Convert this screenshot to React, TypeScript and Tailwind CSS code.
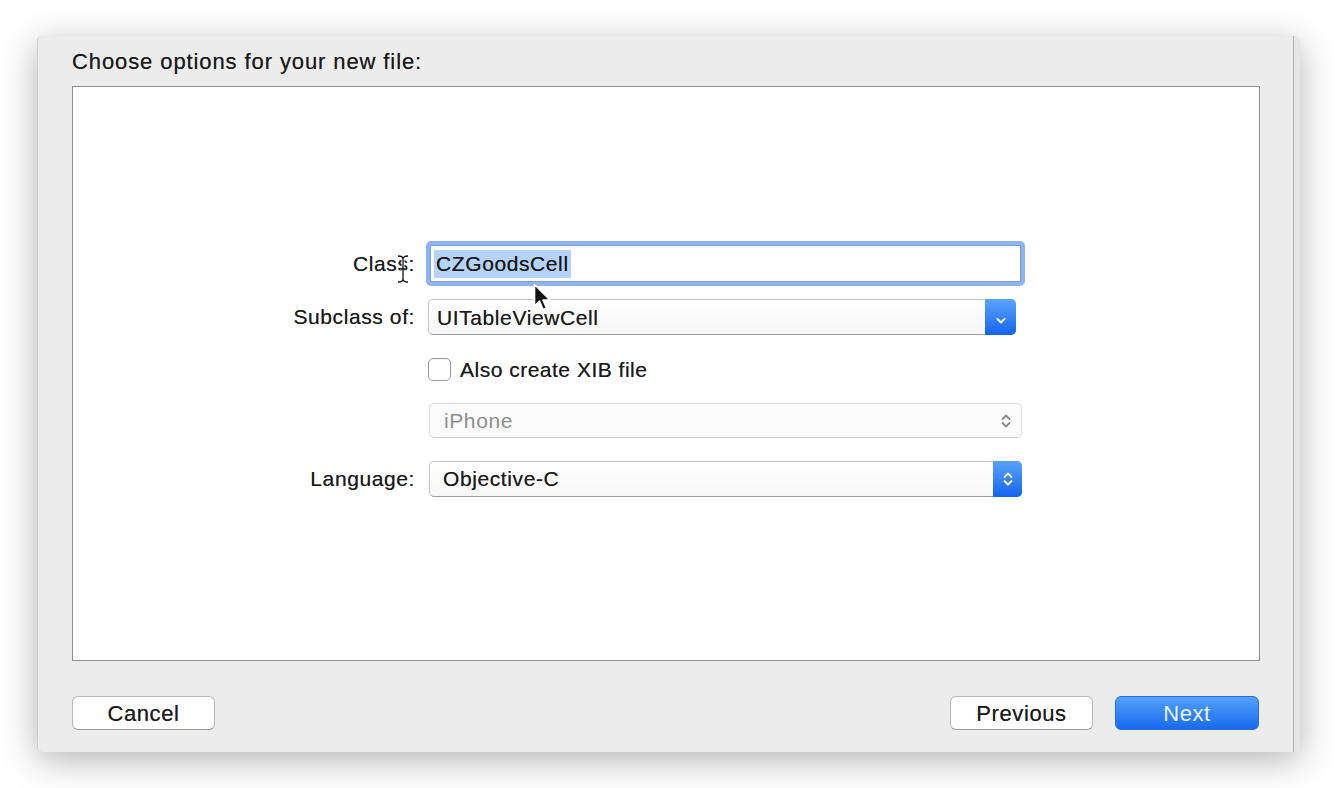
import React from 'react';

const font = { fontFamily: '"Liberation Sans", Arial, sans-serif' };

const Chevron = ({ up = true, down = true, color = 'white' }: { up?: boolean; down?: boolean; color?: string }) => (
  <svg width="12" height="18" viewBox="0 0 12 18" fill="none">
    {up && <path d="M2.5 7 L6 3.5 L9.5 7" stroke={color} strokeWidth="1.8" strokeLinecap="round" strokeLinejoin="round" />}
    {down && <path d="M2.5 11 L6 14.5 L9.5 11" stroke={color} strokeWidth="1.8" strokeLinecap="round" strokeLinejoin="round" />}
  </svg>
);

const Label = ({ children }: { children: React.ReactNode }) => (
  <div className="w-[342px] text-right text-[21px] tracking-[0.6px] text-[#1a1a1a] [text-shadow:0_0_0.5px_rgba(0,0,0,0.6)]">{children}</div>
);

export default function App() {
  return (
    <div className="min-h-screen w-[1338px] h-[788px] bg-white pt-[36px] pl-[37px] overflow-hidden" style={font}>
      {/* dialog window */}
      <div className="flex w-[1263px] h-[716px] rounded-[5px] bg-[#ececec] shadow-[0_8px_36px_rgba(0,0,0,0.3)]">
        <div className="flex flex-col w-[1256px] border-l border-[#cfcfcf] rounded-l-[5px]">
          <div className="h-[50px] pl-[34px] pt-[9px] text-[22px] tracking-[0.9px] text-[#1a1a1a] [text-shadow:0_0_0.5px_rgba(0,0,0,0.6)]">
            Choose options for your new file:
          </div>

          {/* content panel */}
          <div className="relative ml-[34px] w-[1188px] h-[575px] bg-white border border-[#8f8f8f] flex flex-col pt-[154px]">
            {/* Class */}
            <div className="flex items-center h-[45px]">
              <Label>Class:</Label>
              <div className="ml-[11px] w-[599px] h-[45px] rounded-[5px] bg-[#8db4f2] p-[4px]">
                <div className="w-full h-full bg-white border border-[#7d9fd6] flex items-center pl-[3px]">
                  <span className="bg-[#b5d3f8] px-[2px] leading-[28px] text-[21px] tracking-[0.6px] text-[#141414] [text-shadow:0_0_0.5px_rgba(0,0,0,0.6)]">CZGoodsCell</span>
                </div>
              </div>
            </div>

            {/* Subclass of */}
            <div className="flex items-center h-[36px] mt-[13px]">
              <Label>Subclass of:</Label>
              <div className="ml-[13px] w-[588px] h-[36px] flex rounded-[5px] border border-[#c4c4c4] border-b-[#9d9d9d] bg-gradient-to-b from-white to-[#f7f7f7]">
                <div className="flex-1 flex items-center pl-[8px] pt-[2px] text-[21px] tracking-[0.6px] text-[#1a1a1a] [text-shadow:0_0_0.5px_rgba(0,0,0,0.6)]">UITableViewCell</div>
                <div className="w-[31px] -my-px -mr-px rounded-r-[5px] bg-gradient-to-b from-[#5aa3fb] to-[#1263ec] flex items-center justify-center">
                  <Chevron up={false} />
                </div>
              </div>
            </div>

            {/* checkbox */}
            <div className="flex items-center h-[23px] mt-[23px]">
              <div className="w-[342px]" />
              <div className="ml-[13px] w-[23px] h-[23px] rounded-[5px] border border-[#9a9a9a] bg-white shadow-[inset_0_1px_1px_rgba(0,0,0,0.06)]" />
              <span className="ml-[9px] text-[21px] tracking-[0.5px] text-[#1a1a1a] [text-shadow:0_0_0.5px_rgba(0,0,0,0.6)]">Also create XIB file</span>
            </div>

            {/* iPhone (disabled) */}
            <div className="flex items-center h-[35px] mt-[22px]">
              <div className="w-[342px]" />
              <div className="ml-[14px] w-[593px] h-[35px] flex rounded-[5px] border border-[#dedede] border-b-[#cdcdcd] bg-[#fbfbfb]">
                <div className="flex-1 flex items-center pl-[14px] text-[21px] tracking-[0.6px] text-[#8e8e8e]">iPhone</div>
                <div className="w-[30px] flex items-center justify-center">
                  <Chevron color="#8a8a8a" />
                </div>
              </div>
            </div>

            {/* Language */}
            <div className="flex items-center h-[36px] mt-[23px]">
              <Label>Language:</Label>
              <div className="ml-[14px] w-[593px] h-[36px] flex rounded-[5px] border border-[#c4c4c4] border-b-[#9d9d9d] bg-gradient-to-b from-white to-[#f7f7f7]">
                <div className="flex-1 flex items-center pl-[13px] text-[21px] tracking-[0.6px] text-[#1a1a1a] [text-shadow:0_0_0.5px_rgba(0,0,0,0.6)]">Objective-C</div>
                <div className="w-[29px] -my-px -mr-px rounded-r-[5px] bg-gradient-to-b from-[#5aa3fb] to-[#1263ec] flex items-center justify-center">
                  <Chevron />
                </div>
              </div>
            </div>

            {/* I-beam cursor */}
            <svg className="absolute left-[323px] top-[167px]" width="14" height="30" viewBox="0 0 14 30" fill="none">
              <path d="M2 2 Q7 2 7 5 Q7 2 12 2 M7 5 V25 M2 28 Q7 28 7 25 Q7 28 12 28 M4 15 H10" stroke="white" strokeWidth="3" />
              <path d="M2 2 Q7 2 7 5 Q7 2 12 2 M7 5 V25 M2 28 Q7 28 7 25 Q7 28 12 28 M4 15 H10" stroke="#111" strokeWidth="1.3" />
            </svg>

            {/* arrow cursor */}
            <svg className="absolute left-[460px] top-[196px]" width="20" height="30" viewBox="0 0 20 30">
              <path d="M1.5 1.5 V23 L6.5 18 L10 26.5 L13.5 25 L10 17 H17 Z" fill="#111" stroke="white" strokeWidth="1.6" strokeLinejoin="round" />
            </svg>
          </div>

          {/* buttons */}
          <div className="flex items-center pl-[34px] pr-[34px] mt-[35px]">
            <button className="w-[143px] h-[34px] rounded-[6px] bg-white border border-[#b9b9b9] border-b-[#9a9a9a] text-[22px] tracking-[0.6px] text-[#1a1a1a] [text-shadow:0_0_0.5px_rgba(0,0,0,0.6)]">
              Cancel
            </button>
            <div className="flex-1" />
            <button className="w-[143px] h-[34px] rounded-[6px] bg-white border border-[#b9b9b9] border-b-[#9a9a9a] text-[22px] tracking-[0.6px] text-[#1a1a1a] [text-shadow:0_0_0.5px_rgba(0,0,0,0.6)]">
              Previous
            </button>
            <button className="ml-[22px] w-[144px] h-[34px] rounded-[6px] bg-gradient-to-b from-[#54a0fb] to-[#1669ef] border border-[#2a6fd8] text-[22px] tracking-[0.6px] text-[#eaf5ff]">
              Next
            </button>
          </div>
        </div>
        <div className="w-px bg-[#b2b2b2]" />
        <div className="w-[6px] rounded-tr-[5px] rounded-br-[5px] bg-[#e6e6e6]" />
      </div>
    </div>
  );
}
